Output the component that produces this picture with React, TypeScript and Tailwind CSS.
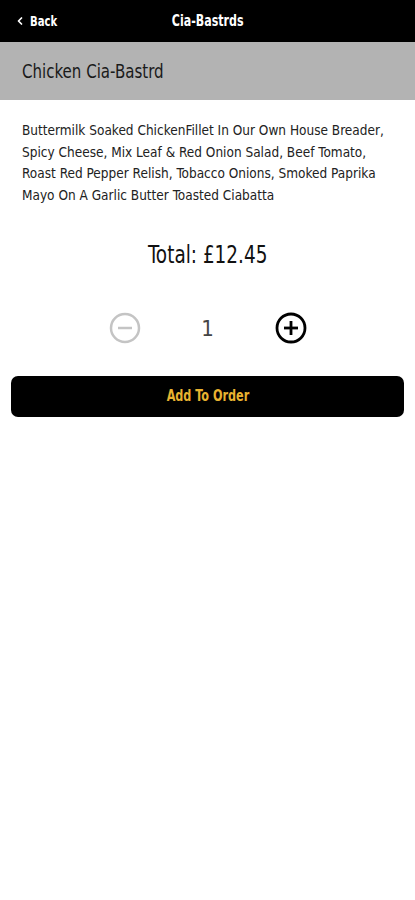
import { ChevronLeft } from "lucide-react";

const font = { fontFamily: '"Liberation Sans Narrow", "DejaVu Sans Condensed", "Liberation Sans", sans-serif' };

export default function App() {
	return (
		<div className="min-h-[900px] w-[415px] bg-white" style={font}>
			<div className="relative flex h-[42px] items-center justify-center bg-black text-white">
				<div className="absolute left-[14px] top-0 flex h-full items-center gap-[4px] text-[14px] font-bold">
					<ChevronLeft size={12} strokeWidth={3.5} />
					<span className="inline-block origin-left scale-x-[0.8]">Back</span>
				</div>
				<span className="inline-block scale-x-[0.82] text-[15px] font-bold">Cia-Bastrds</span>
			</div>
			<div className="flex h-[58px] items-center bg-[#b3b3b3] px-[22px] text-[#1a1a1a]">
				<span className="inline-block origin-left scale-x-[0.88] text-[19px]">Chicken Cia-Bastrd</span>
			</div>
			<p className="px-[22px] pt-[20px] text-[13.5px] leading-[21.5px] text-[#222]">
				Buttermilk Soaked ChickenFillet In Our Own House Breader, Spicy Cheese, Mix Leaf &amp; Red Onion Salad, Beef Tomato, Roast Red Pepper Relish, Tobacco Onions, Smoked Paprika Mayo On A Garlic Butter Toasted Ciabatta
			</p>
			<div className="mt-[30px] text-center">
				<span className="inline-block scale-x-[0.82] text-[25px] text-[#111]">Total: £12.45</span>
			</div>
			<div className="mt-[38px] flex items-center justify-center gap-[52px]">
				<svg width="32" height="32" viewBox="0 0 32 32" fill="none" stroke="#c4c4c4" strokeWidth="2.5">
					<circle cx="16" cy="16" r="14" />
					<line x1="9" y1="16" x2="23" y2="16" />
				</svg>
				<span className="w-[30px] text-center text-[22px] text-[#444]">1</span>
				<svg width="32" height="32" viewBox="0 0 32 32" fill="none" stroke="#000" strokeWidth="2.8">
					<circle cx="16" cy="16" r="14" />
					<line x1="9" y1="16" x2="23" y2="16" />
					<line x1="16" y1="9" x2="16" y2="23" />
				</svg>
			</div>
			<div className="mx-[11px] mt-[31px] flex h-[41px] items-center justify-center rounded-[7px] bg-black">
				<span className="inline-block scale-x-[0.78] text-[16px] font-bold text-[#e8b230]">Add To Order</span>
			</div>
		</div>
	);
}
